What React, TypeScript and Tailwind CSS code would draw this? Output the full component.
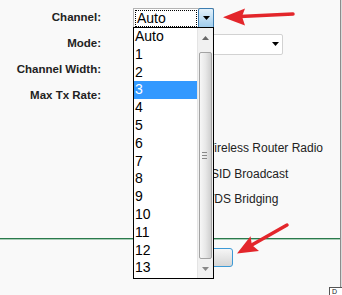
import React from "react";

const items = ["Auto", "1", "2", "3", "4", "5", "6", "7", "8", "9", "10", "11", "12", "13"];

function Row({ label, children }: { label: string; children?: React.ReactNode }) {
  return (
    <div className="flex h-[26px] items-center">
      <div className="w-[101px] text-right text-[11.5px] font-bold text-[#222]">{label}</div>
      <div className="ml-[32px] flex items-center">{children}</div>
    </div>
  );
}

export default function App() {
  return (
    <div className="relative w-[342px] h-[295px] overflow-hidden bg-[#f9f9f9] font-['Liberation_Sans',Arial,sans-serif]">
      <div className="flex h-full">
        <div className="w-[340px] flex flex-col">
          <div className="pt-[5px] flex flex-col">
            <Row label="Channel:">
              <div className="flex w-[81px] h-[21px] border border-[#b4b4b4] bg-white">
                <div className="flex-1 p-[1px]">
                  <div className="h-full border border-dotted border-black flex items-center pl-[1px] text-[14px] text-black leading-none">
                    Auto
                  </div>
                </div>
                <div className="w-[16px] h-[21px] -mt-px -mr-px rounded-[2px] border border-[#3c7db0] bg-gradient-to-b from-[#e3f1fb] to-[#9ccbec] flex items-center justify-center">
                  <svg width="7" height="4" viewBox="0 0 7 4">
                    <polygon points="0,0 7,0 3.5,4" fill="#000" />
                  </svg>
                </div>
              </div>
            </Row>
            <Row label="Mode:">
              <div className="w-[150px] h-[21px] border border-[#d2d2d2] rounded-[2px] bg-white flex items-center justify-end pr-[3px]">
                <svg width="7" height="4" viewBox="0 0 7 4">
                  <polygon points="0,0 7,0 3.5,4" fill="#000" />
                </svg>
              </div>
            </Row>
            <Row label="Channel Width:" />
            <Row label="Max Tx Rate:" />
          </div>
          <div className="mt-[26.5px] pl-[203px] flex flex-col text-[12px] text-[#222] whitespace-nowrap">
            <div className="h-[25.5px] flex items-center">Wireless Router Radio</div>
            <div className="h-[25.5px] flex items-center">SSID Broadcast</div>
            <div className="h-[25.5px] flex items-center">WDS Bridging</div>
          </div>
          <div className="mt-[26px] h-px bg-[#2a7a4c]" />
          <div className="h-px bg-[#a9cdb7]" />
          <div className="mt-[8px] ml-[160px] w-[73px] h-[19px] rounded-[3px] border border-[#3d9ad6] bg-gradient-to-b from-[#f6f6f6] to-[#d6d6d6]" />
        </div>
        <div className="w-px bg-[#8c8c8c]" />
        <div className="w-px bg-[#dadada]" />
      </div>

      {/* dropdown list */}
      <div className="absolute left-[133px] top-[27px] w-[81px] h-[252px] border border-black bg-white flex">
        <div className="flex-1 flex flex-col">
          {items.map((i) => (
            <div
              key={i}
              className={
                i === "3"
                  ? "h-[17.8px] leading-[17.8px] text-[14px] pl-[1px] bg-[#3399ff] text-white"
                  : "h-[17.8px] leading-[17.8px] text-[14px] pl-[1px] text-black"
              }
            >
              {i}
            </div>
          ))}
        </div>
        <div className="w-[16px] flex flex-col bg-[#f1f1f1] border-l border-[#e4e4e4]">
          <div className="h-[24px] flex justify-center pt-[8px]">
            <svg width="7" height="4" viewBox="0 0 7 4">
              <polygon points="3.5,0 7,4 0,4" fill="#666" />
            </svg>
          </div>
          <div className="flex-1 mx-px rounded-[2px] border border-[#a3a3a3] bg-gradient-to-r from-[#f7f7f7] via-[#e8e8e8] to-[#cfcfcf] flex items-center pl-[2px]">
            <svg width="5" height="7" viewBox="0 0 5 7">
              <rect x="0" y="0" width="5" height="1" fill="#888" />
              <rect x="0" y="3" width="5" height="1" fill="#888" />
              <rect x="0" y="6" width="5" height="1" fill="#888" />
            </svg>
          </div>
          <div className="h-[19px] flex justify-center pt-[8px]">
            <svg width="7" height="4" viewBox="0 0 7 4">
              <polygon points="0,0 7,0 3.5,4" fill="#888" />
            </svg>
          </div>
        </div>
      </div>

      {/* small corner box */}
      <div className="absolute left-[329px] top-[287px] w-[20px] h-[12px] border border-[#555] bg-white text-[7px] leading-[8px] pl-[2px] text-[#222]">
        D
      </div>

      {/* red arrows */}
      <svg className="absolute left-0 top-0 pointer-events-none" width="342" height="295" viewBox="0 0 342 295">
        <line x1="293" y1="14" x2="240" y2="16.6" stroke="#e3262b" strokeWidth="3.5" strokeLinecap="round" />
        <polygon points="223,17.2 245,8.5 242,16.6 245,25.5" fill="#e3262b" />
        <line x1="287" y1="225" x2="250" y2="246" stroke="#e3262b" strokeWidth="3.5" strokeLinecap="round" />
        <polygon points="237,253.5 250.5,236.2 251.9,245.1 259,251" fill="#e3262b" />
      </svg>
    </div>
  );
}
